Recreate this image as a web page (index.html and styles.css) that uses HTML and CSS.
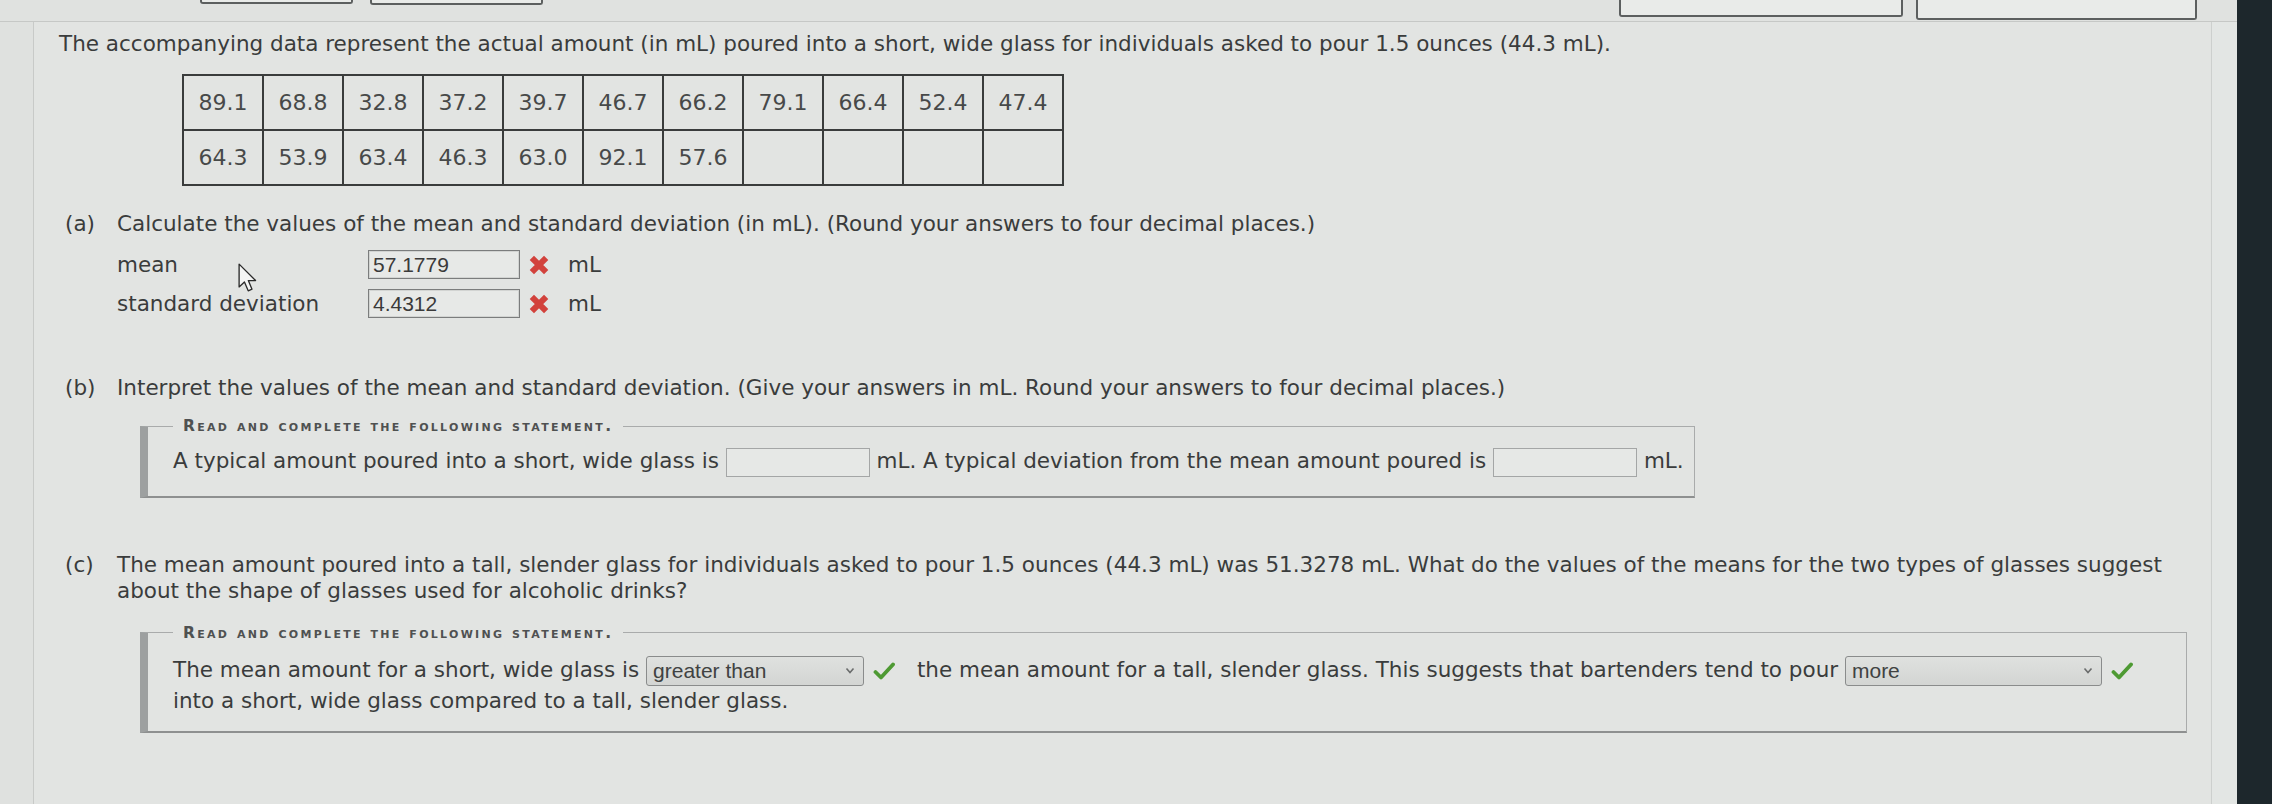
FILE: index.html
```html
<!DOCTYPE html>
<html lang="en">
<head>
<meta charset="utf-8">
<title>Mean and standard deviation</title>
<link rel="stylesheet" href="styles.css">
</head>
<body>
<div class="screen">
  <div class="page">
    <div class="topbar">
      <div class="tab tab-1"></div>
      <div class="tab tab-2"></div>
      <div class="tab tab-3"></div>
      <div class="tab tab-4"></div>
    </div>
    <div class="workspace">
      <div class="gutter-left"></div>
      <main class="panel">
        <p class="intro">The accompanying data represent the actual amount (in mL) poured into a short, wide glass for individuals asked to pour 1.5 ounces (44.3 mL).</p>
        <table class="data">
          <tr><td>89.1</td><td>68.8</td><td>32.8</td><td>37.2</td><td>39.7</td><td>46.7</td><td>66.2</td><td>79.1</td><td>66.4</td><td>52.4</td><td>47.4</td></tr>
          <tr><td>64.3</td><td>53.9</td><td>63.4</td><td>46.3</td><td>63.0</td><td>92.1</td><td>57.6</td><td></td><td></td><td></td><td></td></tr>
        </table>

        <section class="part part-a">
          <span class="part-label">(a)</span>
          <div class="part-body">
            <p>Calculate the values of the mean and standard deviation (in mL). (Round your answers to four decimal places.)</p>
            <div class="answers">
              <div class="answer-row">
                <span class="answer-label">mean</span>
                <span class="field">57.1779</span>
                <svg class="mark-x" viewBox="0 0 20 20"><path d="M3.5 3.5 L16.5 16.5 M16.5 3.5 L3.5 16.5" /></svg>
                <span class="unit">mL</span>
              </div>
              <div class="answer-row">
                <span class="answer-label">standard deviation</span>
                <span class="field">4.4312</span>
                <svg class="mark-x" viewBox="0 0 20 20"><path d="M3.5 3.5 L16.5 16.5 M16.5 3.5 L3.5 16.5" /></svg>
                <span class="unit">mL</span>
              </div>
              <svg class="cursor" viewBox="0 0 18 27"><path d="M1 1 L1 21.5 L5.8 17 L9.2 25 L12.6 23.6 L9.3 15.8 L15.8 15.8 Z" /></svg>
            </div>
          </div>
        </section>

        <section class="part part-b">
          <span class="part-label">(b)</span>
          <div class="part-body">
            <p>Interpret the values of the mean and standard deviation. (Give your answers in mL. Round your answers to four decimal places.)</p>
            <fieldset class="statement statement-b">
              <legend>Read and complete the following statement.</legend>
              <p class="statement-text">A typical amount poured into a short, wide glass is <span class="blank"></span> mL. A typical deviation from the mean amount poured is <span class="blank"></span> mL.</p>
            </fieldset>
          </div>
        </section>

        <section class="part part-c">
          <span class="part-label">(c)</span>
          <div class="part-body">
            <p>The mean amount poured into a tall, slender glass for individuals asked to pour 1.5 ounces (44.3 mL) was 51.3278 mL. What do the values of the means for the two types of glasses suggest about the shape of glasses used for alcoholic drinks?</p>
            <fieldset class="statement statement-c">
              <legend>Read and complete the following statement.</legend>
              <p class="statement-text">The mean amount for a short, wide glass is <span class="pick"><span class="choice choice-1"><span>greater than</span><svg class="chevron" viewBox="0 0 10 7"><path d="M1.5 1.5 L5 5.5 L8.5 1.5" /></svg></span><svg class="mark-check" viewBox="0 0 22 18"><path d="M2.5 10 L8 15.5 L20 2.5" /></svg></span> the mean amount for a tall, slender glass. This suggests that bartenders tend to pour <span class="pick"><span class="choice choice-2"><span>more</span><svg class="chevron" viewBox="0 0 10 7"><path d="M1.5 1.5 L5 5.5 L8.5 1.5" /></svg></span><svg class="mark-check" viewBox="0 0 22 18"><path d="M2.5 10 L8 15.5 L20 2.5" /></svg></span> into a short, wide glass compared to a tall, slender glass.</p>
            </fieldset>
          </div>
        </section>
      </main>
      <div class="gutter-right"></div>
    </div>
  </div>
  <div class="edge"></div>
</div>
</body>
</html>
```

FILE: styles.css
```css
html, body {
  margin: 0;
  padding: 0;
}

body {
  width: 2272px;
  height: 804px;
  overflow: hidden;
  background: #e2e4e2;
  font-family: "DejaVu Sans", Verdana, sans-serif;
  color: #3a3c3c;
}

.screen {
  display: flex;
  height: 804px;
}

.page {
  flex: 1;
  display: flex;
  flex-direction: column;
  background: #e2e4e2;
}

.topbar {
  height: 21px;
  flex-shrink: 0;
  display: flex;
  align-items: flex-start;
  border-bottom: 1px solid #c6c8c6;
  background: #e0e2e0;
}

.tab {
  box-sizing: border-box;
  border: 2px solid #5c5f5f;
  border-top: none;
  border-radius: 0 0 3px 3px;
  background: #e9ebe9;
}

.tab-1 { margin-left: 200px; width: 153px; height: 4px; }
.tab-2 { margin-left: 17px; width: 173px; height: 5px; }
.tab-3 { margin-left: auto; width: 284px; height: 17px; }
.tab-4 { margin-left: 13px; width: 281px; height: 20px; margin-right: 40px; }

.workspace {
  flex: 1;
  display: flex;
}

.gutter-left {
  width: 33px;
  border-right: 1px solid #c8cac8;
  background: #dfe1df;
}

.gutter-right {
  width: 25px;
  border-left: 1px solid #cdd0ce;
  background: #e3e6e4;
}

.edge {
  width: 35px;
  background: #1d272c;
}

.panel {
  flex: 1;
  padding: 9px 24px 0 25px;
  font-size: 21.5px;
  line-height: 26px;
}

.intro {
  margin: 0;
}

.data {
  border-collapse: collapse;
  margin: 17px 0 0 123px;
}

.data td {
  border: 2px solid #3a3c3c;
  width: 78px;
  height: 53px;
  padding: 0;
  text-align: center;
  font-size: 22px;
  color: #474949;
}

.part {
  display: grid;
  grid-template-columns: 52px 1fr;
  margin-left: 6px;
}

.part p {
  margin: 0;
}

.part-a { margin-top: 25px; }
.part-b { margin-top: 57px; }
.part-c { margin-top: 54px; }

.answers {
  position: relative;
  margin-top: 13px;
  display: flex;
  flex-direction: column;
  gap: 10px;
}

.answer-row {
  display: flex;
  align-items: center;
  height: 29px;
}

.answer-label {
  width: 251px;
}

.field {
  box-sizing: border-box;
  width: 152px;
  height: 29px;
  border: 1px solid #7b7d7d;
  box-shadow: inset 0 0 0 1px #d2d4d2;
  background: #e7e9e7;
  padding-left: 4px;
  font-family: "Liberation Sans", Arial, sans-serif;
  font-size: 21px;
  line-height: 27px;
  color: #3a3a3a;
}

.mark-x {
  width: 22px;
  height: 22px;
  margin-left: 8px;
}

.mark-x path {
  stroke: #d2423c;
  stroke-width: 5.5;
  fill: none;
}

.unit {
  margin-left: 18px;
}

.cursor {
  position: absolute;
  left: 121px;
  top: 13px;
  width: 20px;
  height: 30px;
}

.cursor path {
  fill: #f4f5f4;
  stroke: #2a2a2a;
  stroke-width: 1.2;
  stroke-linejoin: round;
}

.statement {
  box-sizing: border-box;
  width: fit-content;
  min-width: 0;
  margin: 17px 0 0 23px;
  padding: 12px 30px 19px 25px;
  border: 1px solid #a9abab;
  border-left: 8px solid #9da0a0;
  border-bottom: 2px solid #8e9090;
}

.statement-b {
  padding-right: 10px;
}

.statement-c {
  margin-top: 21px;
  padding-top: 14px;
  padding-bottom: 15px;
}

.statement legend {
  padding: 0 10px;
  font-family: "DejaVu Sans", Verdana, sans-serif;
  font-weight: bold;
  font-size: 15.5px;
  line-height: 16px;
  font-variant: small-caps;
  letter-spacing: 2.3px;
  color: #4f5151;
}

.statement .statement-text {
  line-height: 30px;
}

.blank {
  display: inline-block;
  box-sizing: border-box;
  width: 144px;
  height: 29px;
  border: 1px solid #a4a6a6;
  background: #e6e8e6;
  vertical-align: middle;
}

.pick {
  white-space: nowrap;
}

.choice {
  display: inline-flex;
  align-items: center;
  justify-content: space-between;
  box-sizing: border-box;
  height: 30px;
  padding: 0 8px 0 6px;
  border: 1px solid #8a8c8c;
  border-radius: 3px;
  background: linear-gradient(#dfe1df, #d3d5d3);
  font-family: "Liberation Sans", Arial, sans-serif;
  font-size: 21px;
  line-height: 28px;
  color: #404242;
  vertical-align: middle;
}

.choice-1 { width: 218px; }
.choice-2 { width: 257px; }

.chevron {
  width: 10px;
  height: 7px;
}

.chevron path {
  fill: none;
  stroke: #6a6c6c;
  stroke-width: 1.6;
}

.mark-check {
  width: 22px;
  height: 18px;
  margin-left: 9px;
  margin-right: 15px;
  vertical-align: middle;
}

.mark-check path {
  fill: none;
  stroke: #4e9a33;
  stroke-width: 3.8;
  stroke-linecap: round;
  stroke-linejoin: round;
}
```
